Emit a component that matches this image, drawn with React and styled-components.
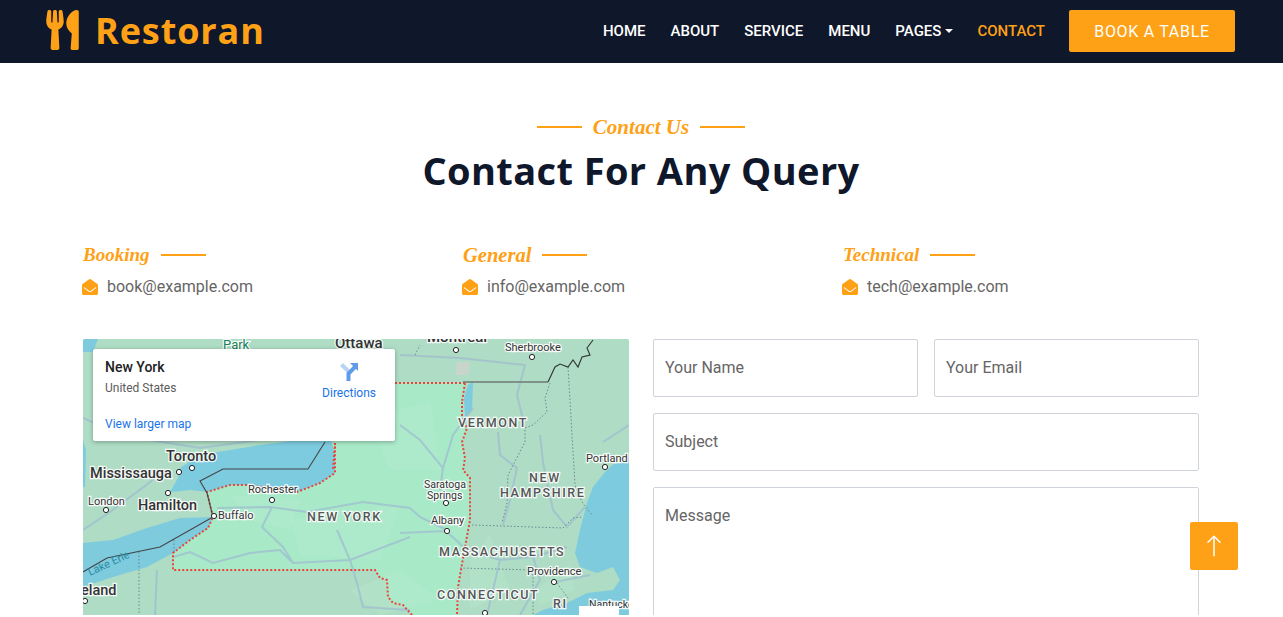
import React from "react";
import styled, { createGlobalStyle } from "styled-components";
import { FaUtensils, FaEnvelopeOpen } from "react-icons/fa";

const ORANGE = "#FEA116";
const DARK = "#0F172B";
const DISPLAY = `"Open Sans", "Noto Sans", sans-serif`;
const SCRIPT = `"Liberation Serif", cursive`;

const GlobalStyle = createGlobalStyle`
  * { box-sizing: border-box; }
  body {
    margin: 0;
    background: #fff;
    font-family: "Roboto", sans-serif;
    color: #666565;
    overflow: hidden;
  }
`;

const Page = styled.div`
  height: 615px;
  overflow: hidden;
`;

const Navbar = styled.nav`
  height: 63px;
  background: ${DARK};
  display: flex;
  align-items: center;
  justify-content: space-between;
  padding: 0 48px 1px 46px;
`;

const Logo = styled.a`
  display: flex;
  align-items: center;
  gap: 16px;
  color: ${ORANGE};
  font-family: ${DISPLAY};
  font-weight: 700;
  font-size: 36px;
  letter-spacing: 0.9px;
  line-height: 1;
  svg { width: 33px; height: 40px; margin-top: -2px; }
`;

const NavList = styled.div`
  display: flex;
  align-items: center;
  gap: 25px;
`;

const NavLink = styled.a`
  color: ${(p) => (p.$active ? ORANGE : "#fff")};
  font-size: 15px;
  font-weight: 500;
  display: flex;
  align-items: center;
`;

const Caret = styled.span`
  margin: 0 -1px 0 4px;
  border-top: 4px solid #fff;
  border-left: 4px solid transparent;
  border-right: 4px solid transparent;
`;

const BookButton = styled.a`
  margin-left: -1px;
  width: 166px;
  height: 42px;
  background: ${ORANGE};
  color: #fff;
  font-size: 16px;
  letter-spacing: 0.7px;
  border-radius: 2px;
  display: flex;
  align-items: center;
  justify-content: center;
`;

const Container = styled.main`
  width: 1140px;
  margin-left: 71px;
  padding: 49px 12px 0;
`;

const Header = styled.header`
  text-align: center;
`;

const Eyebrow = styled.div`
  display: flex;
  align-items: center;
  justify-content: center;
  gap: 11px;
  height: 30px;
`;

const Rule = styled.span`
  width: 45px;
  height: 2px;
  background: ${ORANGE};
`;

const ScriptText = styled.span`
  font-family: ${SCRIPT};
  font-style: italic;
  font-weight: 700;
  font-size: ${(p) => p.$size}px;
  line-height: 30px;
  color: ${ORANGE};
`;

const Title = styled.h1`
  margin: 4px 0 0;
  font-family: ${DISPLAY};
  font-weight: 700;
  font-size: 38px;
  letter-spacing: 0.4px;
  line-height: 48px;
  color: ${DARK};
`;

const InfoRow = styled.section`
  display: grid;
  grid-template-columns: repeat(3, 380px);
  margin-top: 46px;
`;

const InfoHeading = styled.div`
  display: flex;
  align-items: center;
  gap: 11px;
  height: 30px;
`;

const InfoMail = styled.div`
  display: flex;
  align-items: center;
  gap: 9px;
  margin-top: 5px;
  font-size: 16px;
  line-height: 24px;
  svg { width: 16px; height: 16px; color: ${ORANGE}; margin-left: -1px; }
`;

const ContactGrid = styled.section`
  display: grid;
  grid-template-columns: 546px 546px;
  gap: 24px;
  margin-top: 40px;
`;

const MapFrame = styled.div`
  position: relative;
  height: 276px;
  overflow: hidden;
  border-radius: 2px 2px 0 0;
  svg.map { display: block; width: 546px; height: 276px; }
`;

const MapCard = styled.div`
  position: absolute;
  top: 10px;
  left: 10px;
  width: 302px;
  height: 92px;
  background: #fff;
  border-radius: 2px;
  box-shadow: 0 1px 4px rgba(0, 0, 0, 0.3);
  padding: 9px 12px;
  display: flex;
  justify-content: space-between;
  font-size: 12px;
`;

const CardPlace = styled.div`
  display: flex;
  flex-direction: column;
`;

const PlaceName = styled.div`
  font-size: 14px;
  font-weight: 500;
  line-height: 18px;
  color: #202124;
`;

const PlaceRegion = styled.div`
  margin-top: 4px;
  line-height: 16px;
  color: #5b5b5b;
`;

const MapLink = styled.a`
  color: #1a73e8;
  line-height: 16px;
`;

const LargerLink = styled(MapLink)`
  margin-top: 20px;
`;

const Directions = styled.div`
  display: flex;
  flex-direction: column;
  align-items: center;
  gap: 4px;
  margin-top: 5px;
  margin-right: 7px;
  svg { width: 18px; height: 18px; }
`;

const MapLabel = styled.text`
  font-family: "Roboto", sans-serif;
  font-size: ${(p) => p.$size}px;
  font-weight: ${(p) => p.$weight || 400};
  letter-spacing: ${(p) => p.$spacing || 0}px;
  fill: ${(p) => p.$fill || "#333"};
  stroke: #fff;
  stroke-width: ${(p) => (p.$plain ? 0 : 2.5)}px;
  stroke-opacity: 0.9;
  paint-order: stroke;
`;

const Form = styled.form`
  display: grid;
  grid-template-columns: 1fr 1fr;
  gap: 16px;
`;

const fieldCss = `
  width: 100%;
  border: 1px solid #ced4da;
  border-radius: 2px;
  background: #fff;
  padding: 0 11px;
  font-family: "Roboto", sans-serif;
  font-size: 16px;
  color: #666565;
  outline: none;
  &::placeholder { color: #666565; opacity: 1; }
`;

const Field = styled.input`
  ${fieldCss}
  height: 58px;
  padding-bottom: 2px;
  grid-column: ${(p) => (p.$wide ? "1 / -1" : "auto")};
`;

const MessageField = styled.textarea`
  ${fieldCss}
  grid-column: 1 / -1;
  height: 150px;
  padding-top: 16px;
  line-height: 24px;
  resize: none;
  display: block;
`;

const BackToTop = styled.a`
  position: fixed;
  left: 1190px;
  top: 522px;
  width: 48px;
  height: 48px;
  background: ${ORANGE};
  border-radius: 2px;
  display: flex;
  align-items: center;
  justify-content: center;
  svg { width: 24px; height: 24px; }
`;

const INFO = [
  { title: "Booking", mail: "book@example.com", size: 19 },
  { title: "General", mail: "info@example.com", size: 20.5 },
  { title: "Technical", mail: "tech@example.com", size: 19 },
];

const ROADS = [
  "M83 530L110 512L145 486L165 470",
  "M83 418L110 430L150 440L200 448L260 440",
  "M217 508L270 507L307 512L363 502L410 508L420 517L447 530",
  "M272 507L262 527L283 547L293 563L350 560L410 537",
  "M173 557L190 552L213 563L250 553L280 550L293 563",
  "M337 530L350 560L357 583L363 607L410 610",
  "M157 570L155 615",
  "M400 355L460 358L525 365L517 395L525 428",
  "M498 432L500 455L517 468L510 500L503 525",
  "M443 468L453 435L473 408",
  "M540 435L543 462L547 482L553 510L567 527L585 507",
  "M603 442L629 425",
  "M447 531L400 533",
  "M447 532L467 550L500 560L533 557L567 547",
  "M500 560L487 615",
  "M533 557L540 580L520 615",
  "M555 582L590 575",
  "M400 425L420 440L443 468L440 490",
];

const DOTTED = [
  "M550 383L545 398L547 412L533 425L525 428L525 442L508 475L507 503L502 523",
  "M472 525L563 528L573 518L583 517",
  "M568 367L575 485L582 502L592 515",
  "M460 568L533 570L533 615",
  "M557 583L568 598",
  "M139 552L139 615",
  "M174 540L174 553",
  "M415 355L420 345",
];

const PATCHES = [
  "M220 470L300 445L330 460L290 490L240 485Z",
  "M230 495L300 500L290 530L250 520Z",
  "M290 520L400 505L380 560L300 555Z",
  "M370 420L430 400L440 470L390 470Z",
  "M350 590L400 570L440 600L380 615Z",
  "M470 560L490 535L510 590L470 610Z",
  "M535 590L570 565L575 590L540 605Z",
];

const LABELS = [
  { t: "Park", x: 223, y: 349, size: 13, fill: "#1a7f5a" },
  { t: "Ottawa", x: 335, y: 348, size: 15, weight: 500 },
  { t: "Montreal", x: 427, y: 342, size: 15, weight: 500 },
  { t: "Sherbrooke", x: 505, y: 351, size: 11 },
  { t: "Toronto", x: 166, y: 461, size: 14.5, weight: 500 },
  { t: "Mississauga", x: 90, y: 478, size: 14.5, weight: 500 },
  { t: "London", x: 88, y: 505, size: 11 },
  { t: "Hamilton", x: 138, y: 510, size: 14.5, weight: 500 },
  { t: "Buffalo", x: 218, y: 519, size: 11 },
  { t: "Rochester", x: 248, y: 493, size: 11 },
  { t: "NEW YORK", x: 307, y: 521, size: 12.5, weight: 500, spacing: 1.6, fill: "#555" },
  { t: "VERMONT", x: 458, y: 427, size: 12.5, weight: 500, spacing: 1.6, fill: "#555" },
  { t: "NEW", x: 529, y: 482, size: 12.5, weight: 500, spacing: 1.6, fill: "#555" },
  { t: "HAMPSHIRE", x: 500, y: 497, size: 12.5, weight: 500, spacing: 1.6, fill: "#555" },
  { t: "Saratoga", x: 424, y: 488, size: 10.5 },
  { t: "Springs", x: 427, y: 499, size: 10.5 },
  { t: "Albany", x: 431, y: 524, size: 11 },
  { t: "MASSACHUSETTS", x: 439, y: 556, size: 12.5, weight: 500, spacing: 1.6, fill: "#555" },
  { t: "Providence", x: 527, y: 575, size: 11 },
  { t: "CONNECTICUT", x: 437, y: 599, size: 12.5, weight: 500, spacing: 1.6, fill: "#555" },
  { t: "RI", x: 553, y: 608, size: 12.5, weight: 500, spacing: 1.6, fill: "#555" },
  { t: "Nantucket", x: 589, y: 608, size: 10.5 },
  { t: "Portland", x: 586, y: 462, size: 11 },
  { t: "Cleveland", x: 53, y: 595, size: 14.5, weight: 500 },
];

const DOTS = [
  [456, 350], [532, 357], [192, 468], [179, 472], [168, 493], [106, 510],
  [214, 516], [272, 500], [605, 467], [447, 531], [446, 503], [554, 582],
  [85, 601], [485, 613],
];

// page coordinates are kept in the viewBox so the map lines up with the reference
const MapArt = () => (
  <svg className="map" viewBox="83 339 546 276">
    <rect x="83" y="339" width="546" height="276" fill="#aedcc4" />
    <path
      d="M335 443L328 390L340 383L465 383L462 402L462 415L467 428L462 442L465 458L463 470L470 478L470 520L465 547L458 587L457 615L412 615L403 605L393 603L388 597L387 580L380 578L375 570L173 570L173 553L213 517L207 492Z"
      fill="#a8e9c8"
    />
    {PATCHES.map((d) => <path key={d} d={d} fill="#b6eed2" opacity="0.35" />)}
    <path d="M83 339H98L93 352H83Z" fill="#7ecbde" />
    <path d="M83 440L86 450L85 487L83 487Z" fill="#7ecbde" />
    <path
      d="M180 468L200 455L260 445L330 436L335 455L335 473L320 483L297 492L247 485L230 485L207 492L190 490L170 492L178 478Z"
      fill="#7ecbde"
    />
    <path
      d="M83 543L113 540L147 528L180 518L213 517L208 528L190 540L173 553L147 567L113 577L83 587Z"
      fill="#7ecbde"
    />
    <path
      d="M629 458L612 465L605 472L593 487L587 503L580 530L575 553L580 567L597 573L613 567L620 580L613 590L587 593L567 603L543 610L533 615L629 615Z"
      fill="#7ecbde"
    />
    <path d="M457 362L470 362L468 375L455 375Z" fill="#c9d5cb" />
    <path d="M468 385L473 382L472 410L465 418L464 398Z" fill="#7ecbde" />
    <g fill="none" stroke="#9fbdd0" strokeWidth="2" opacity="0.75">
      {ROADS.map((d) => <path key={d} d={d} />)}
    </g>
    <g fill="none" stroke="#64808a" strokeWidth="0.9" strokeDasharray="1.5 2">
      {DOTTED.map((d) => <path key={d} d={d} />)}
    </g>
    <path
      d="M335 443L333 470M395 383L400 383L465 383M462 402L462 415L467 428L462 442L465 458L463 470L470 478L470 520L465 547L458 587L457 615M412 615L403 605L393 603L388 597L387 580L380 578L375 570L173 570L173 553L190 540L208 528L213 517L207 492L230 485L247 485L297 492L320 483L335 473L335 443M465 383L462 402"
      fill="none"
      stroke="#e8453c"
      strokeWidth="2"
      strokeDasharray="2 2"
    />
    <path
      d="M325 442L308 469L223 469L200 481L207 493L213 517L160 547L107 558L83 572"
      fill="none"
      stroke="#444"
      strokeWidth="1.1"
    />
    <path d="M463 382L548 382" fill="none" stroke="#6f7a76" strokeWidth="1.4" />
    <path
      d="M548 382L555 367L560 364L568 367L573 360L578 367L582 357L590 355L587 348L593 340"
      fill="none"
      stroke="#333"
      strokeWidth="1.1"
    />
    {LABELS.map((l) => (
      <MapLabel key={l.t} x={l.x} y={l.y} $size={l.size} $weight={l.weight} $spacing={l.spacing} $fill={l.fill}>
        {l.t}
      </MapLabel>
    ))}
    <MapLabel x="90" y="576" transform="rotate(-25 90 576)" $size={11} $fill="#2b8ba5" $plain>
      Lake Erie
    </MapLabel>
    {DOTS.map(([x, y]) => (
      <circle key={`${x}-${y}`} cx={x} cy={y} r="2.6" fill="#fff" stroke="#222" strokeWidth="1" />
    ))}
    <rect x="579" y="606" width="40" height="9" fill="#fff" />
  </svg>
);

const DirectionsIcon = () => (
  <svg viewBox="0 0 18 18">
    <path d="M0 3L3 0L11 8L8.5 11Z" fill="#b9d3f7" />
    <path d="M8.5 18V10.5L15 4" stroke="#5f9bea" strokeWidth="4" fill="none" />
    <path d="M10 0H18V8Z" fill="#5f9bea" />
  </svg>
);

const ArrowUp = () => (
  <svg viewBox="0 0 16 16" fill="#fff">
    <path
      fillRule="evenodd"
      d="M8 15a.5.5 0 0 0 .5-.5V2.707l3.146 3.147a.5.5 0 0 0 .708-.708l-4-4a.5.5 0 0 0-.708 0l-4 4a.5.5 0 1 0 .708.708L7.5 2.707V14.5a.5.5 0 0 0 .5.5z"
    />
  </svg>
);

const App = () => (
  <Page>
    <GlobalStyle />
    <Navbar>
      <Logo>
        <FaUtensils />
        Restoran
      </Logo>
      <NavList>
        <NavLink>HOME</NavLink>
        <NavLink>ABOUT</NavLink>
        <NavLink>SERVICE</NavLink>
        <NavLink>MENU</NavLink>
        <NavLink>PAGES<Caret /></NavLink>
        <NavLink $active>CONTACT</NavLink>
        <BookButton>BOOK A TABLE</BookButton>
      </NavList>
    </Navbar>
    <Container>
      <Header>
        <Eyebrow>
          <Rule />
          <ScriptText $size={21}>Contact Us</ScriptText>
          <Rule />
        </Eyebrow>
        <Title>Contact For Any Query</Title>
      </Header>
      <InfoRow>
        {INFO.map((item) => (
          <div key={item.title}>
            <InfoHeading>
              <ScriptText $size={item.size}>{item.title}</ScriptText>
              <Rule />
            </InfoHeading>
            <InfoMail>
              <FaEnvelopeOpen />
              {item.mail}
            </InfoMail>
          </div>
        ))}
      </InfoRow>
      <ContactGrid>
        <MapFrame>
          <MapArt />
          <MapCard>
            <CardPlace>
              <PlaceName>New York</PlaceName>
              <PlaceRegion>United States</PlaceRegion>
              <LargerLink>View larger map</LargerLink>
            </CardPlace>
            <Directions>
              <DirectionsIcon />
              <MapLink>Directions</MapLink>
            </Directions>
          </MapCard>
        </MapFrame>
        <Form>
          <Field placeholder="Your Name" />
          <Field placeholder="Your Email" />
          <Field $wide placeholder="Subject" />
          <MessageField placeholder="Message" />
        </Form>
      </ContactGrid>
    </Container>
    <BackToTop>
      <ArrowUp />
    </BackToTop>
  </Page>
);

export default App;
